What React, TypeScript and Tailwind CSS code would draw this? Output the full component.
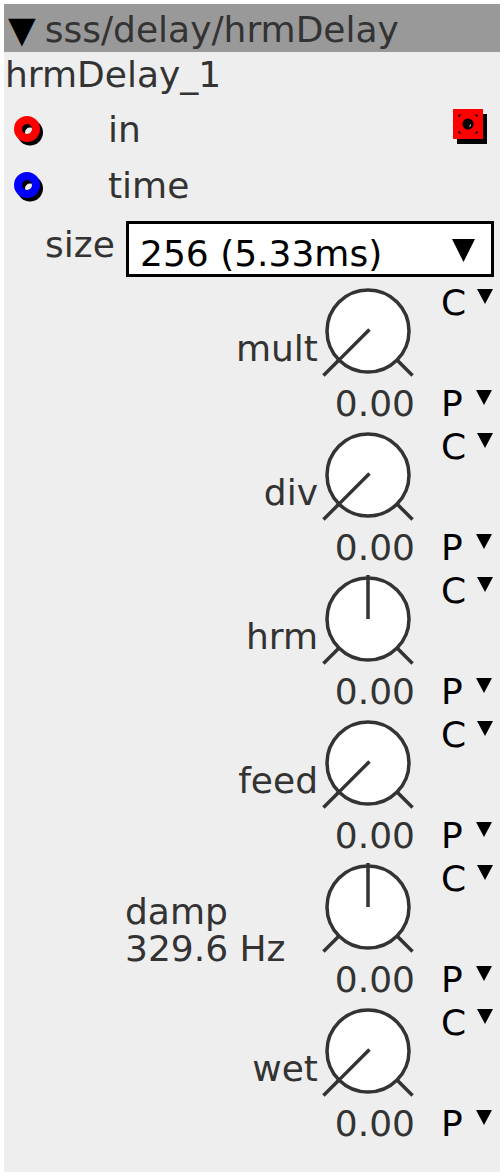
import React from "react";

const F = { fontFamily: "'DejaVu Sans', 'Liberation Sans', sans-serif" } as const;

function Ring({ color }: { color: string }) {
  return (
    <svg width="40" height="40" viewBox="0 0 40 40">
      <circle cx="23" cy="23.5" r="9" fill="none" stroke="#000" strokeWidth="8" />
      <circle cx="20" cy="20" r="9" fill="none" stroke={color} strokeWidth="8" />
    </svg>
  );
}

function Outlet() {
  return (
    <svg width="40" height="40" viewBox="0 0 40 40">
      <rect x="7" y="8" width="30" height="30" fill="#000" />
      <rect x="3" y="3" width="30" height="30" fill="#ff0000" />
      <path d="M9 11 V9 H11 M25 9 H27 V11 M27 25 V27 H25 M11 27 H9 V25" stroke="#000" strokeWidth="1.2" fill="none" />
      <circle cx="18" cy="18" r="5.5" fill="#000" />
      <path d="M19 21 A3.2 3.2 0 0 0 21 17.5 Z" fill="#fff" />
    </svg>
  );
}

function Tri({ w, h }: { w: number; h: number }) {
  return (
    <svg width={w} height={h} viewBox={`0 0 ${w} ${h}`}>
      <polygon points={`0,0 ${w},0 ${w / 2},${h}`} fill="#000" />
    </svg>
  );
}

function Knob({ up }: { up: boolean }) {
  const cx = 50;
  const cy = 48;
  const r = 41;
  const d = Math.SQRT1_2;
  return (
    <svg width="100" height="100" viewBox="0 0 100 100">
      <line x1={cx - r * d} y1={cy + r * d} x2={cx - 63 * d} y2={cy + 63 * d} stroke="#333" strokeWidth="3.5" />
      <line x1={cx + r * d} y1={cy + r * d} x2={cx + 63 * d} y2={cy + 63 * d} stroke="#333" strokeWidth="3.5" />
      <circle cx={cx} cy={cy} r={r} fill="#fff" stroke="#333" strokeWidth="3.5" />
      {up ? (
        <line x1={cx} y1={cy} x2={cx} y2={cy - 44} stroke="#333" strokeWidth="3.5" />
      ) : (
        <line x1={cx + 1.5} y1={cy - 1.5} x2={cx - 44 * d} y2={cy + 44 * d} stroke="#333" strokeWidth="3.5" />
      )}
    </svg>
  );
}

function KnobRow({ label, sub, up }: { label: string; sub?: string; up: boolean }) {
  return (
    <div className="flex h-[144px]">
      <div className="w-[314px] flex justify-end">
        {sub ? (
          <div className="w-[193px] pt-[34px] leading-[37px]">
            <div>{label}</div>
            <div>{sub}</div>
          </div>
        ) : (
          <div className="pt-[46px] leading-[40px]">{label}</div>
        )}
      </div>
      <div className="w-[100px] flex flex-col">
        <Knob up={up} />
        <div className="mt-[1px] leading-[40px] text-right pr-[3px]">0.00</div>
      </div>
      <div className="ml-[23px] flex flex-col justify-between h-[141px] text-black">
        <div className="flex items-start leading-[40px]">
          <span>C</span>
          <span className="ml-[11px] mt-[6px]">
            <Tri w={16} h={15} />
          </span>
        </div>
        <div className="flex items-start leading-[40px]">
          <span>P</span>
          <span className="ml-[13px] mt-[6px]">
            <Tri w={16} h={15} />
          </span>
        </div>
      </div>
    </div>
  );
}

export default function App() {
  return (
    <div className="w-[504px] h-[1176px] bg-white p-[4px]" style={F}>
      <div className="w-[496px] h-[1168px] bg-[#eeeeee] text-[36px] text-[#333333] flex flex-col">
        <div className="h-[48px] bg-[#999999] flex items-start pt-[6px] pl-[4px] leading-[40px] whitespace-nowrap overflow-hidden">
          <span className="text-black">▼</span>
          <span className="ml-[9px]">sss/delay/hrmDelay</span>
        </div>
        <div className="mt-[3px] pl-[1px] leading-[40px]">hrmDelay_1</div>
        <div className="mt-[15px] flex h-[56px]">
          <div className="ml-[3px] -mt-[1px]">
            <Ring color="#ff0000" />
          </div>
          <div className="ml-[61px] leading-[40px]">in</div>
          <div className="ml-auto mr-[10px] -mt-[4px]">
            <Outlet />
          </div>
        </div>
        <div className="flex h-[56px]">
          <div className="ml-[3px] -mt-[1px]">
            <Ring color="#0000ff" />
          </div>
          <div className="ml-[61px] leading-[40px]">time</div>
        </div>
        <div className="flex h-[56px] -mt-[1px]">
          <div className="ml-[41px] mt-[4px] leading-[40px]">size</div>
          <div className="ml-auto mr-[6px] w-[368px] h-[56px] border-[3px] border-black bg-white flex items-start text-black">
            <div className="pl-[11px] pt-[10px] leading-[40px] whitespace-nowrap">256 (5.33ms)</div>
            <div className="ml-auto mr-[16px] mt-[15px]">
              <Tri w={23} h={23} />
            </div>
          </div>
        </div>
        <div className="mt-[6px]">
          <KnobRow label="mult" up={false} />
          <KnobRow label="div" up={false} />
          <KnobRow label="hrm" up={true} />
          <KnobRow label="feed" up={false} />
          <KnobRow label="damp" sub="329.6 Hz" up={true} />
          <KnobRow label="wet" up={false} />
        </div>
      </div>
    </div>
  );
}
